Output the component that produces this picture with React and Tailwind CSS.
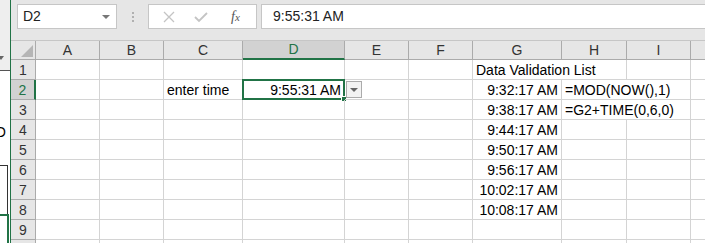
import React from 'react';

const cols = ['A', 'B', 'C', 'D', 'E', 'F', 'G', 'H', 'I', 'J'];

// cell contents: key = col+row
const cells = {
    G1: { text: 'Data Validation List', align: 'left', spill: true },
    C2: { text: 'enter time', align: 'left' },
    D2: { text: '9:55:31 AM', align: 'right' },
    G2: { text: '9:32:17 AM', align: 'right' },
    H2: { text: '=MOD(NOW(),1)', align: 'left', spill: true },
    G3: { text: '9:38:17 AM', align: 'right' },
    H3: { text: '=G2+TIME(0,6,0)', align: 'left', spill: true },
    G4: { text: '9:44:17 AM', align: 'right' },
    G5: { text: '9:50:17 AM', align: 'right' },
    G6: { text: '9:56:17 AM', align: 'right' },
    G7: { text: '10:02:17 AM', align: 'right' },
    G8: { text: '10:08:17 AM', align: 'right' },
};

const rows = [1, 2, 3, 4, 5, 6, 7, 8, 9, 10];

const LeftStrip = () => (
    <div className="relative w-[10px] shrink-0 bg-white">
        <div className="h-[71px] bg-[#eeeeee] border-b border-[#555]" />
        <div className="absolute left-0 top-[56px] w-0 h-0 border-l-[3px] border-r-[3px] border-t-[4px] border-l-transparent border-r-transparent border-t-[#666] -translate-x-[2px]" />
        <span className="absolute -left-[5px] top-[124px] text-[14px] leading-[16px] text-black">O</span>
        <div className="absolute left-0 top-[165px] w-[8px] border-t border-[#333]" />
        <div className="absolute left-[7px] top-[165px] h-[50px] border-l border-[#333]" />
        <div className="absolute left-0 top-[214px] w-[8px] border-t-2 border-[#217346]" />
        <div className="absolute left-[7px] top-[214px] bottom-0 border-l-2 border-[#217346]" />
    </div>
);

const Toolbar = () => (
    <div className="h-[40px] shrink-0 flex items-start pt-[4px] pl-[6px] bg-[#e6e6e6]">
        <div className="w-[100px] h-[25px] bg-white border border-[#c6c6c6] flex items-center justify-between pl-[5px] pr-[6px]">
            <span className="text-[14px] text-[#222]">D2</span>
            <div className="w-0 h-0 border-l-[4px] border-r-[4px] border-t-[4px] border-l-transparent border-r-transparent border-t-[#777]" />
        </div>
        <div className="w-[31px] h-[25px] flex flex-col items-center justify-center gap-[2px]">
            <div className="w-[2px] h-[2px] bg-[#b0b0b0]" />
            <div className="w-[2px] h-[2px] bg-[#b0b0b0]" />
            <div className="w-[2px] h-[2px] bg-[#b0b0b0]" />
        </div>
        <div className="w-[109px] h-[25px] bg-white border border-[#c6c6c6] flex items-center">
            <svg width="12" height="12" viewBox="0 0 12 12" className="ml-[14px]">
                <path d="M1 1 L11 11 M11 1 L1 11" stroke="#c4c4c4" strokeWidth="1.3" fill="none" />
            </svg>
            <svg width="14" height="12" viewBox="0 0 14 12" className="ml-[19px]">
                <path d="M1 6 L5 10 L13 2" stroke="#c4c4c4" strokeWidth="1.8" fill="none" />
            </svg>
            <span className="ml-[23px] text-[14px] italic text-[#555] font-['Liberation_Serif',serif] leading-none">
                f<span className="text-[11px]">x</span>
            </span>
        </div>
        <div className="flex-1 h-[25px] bg-white border border-[#c6c6c6] border-r-0 ml-[4px] flex items-center pl-[11px]">
            <span className="text-[14px] text-[#222]">9:55:31 AM</span>
        </div>
    </div>
);

const Sheet = () => (
    <div className="shrink-0 grid grid-cols-[25px_64px_64px_79px_102px_64px_64px_89px_65px_64px_64px] grid-rows-[19px_repeat(10,20px)] bg-white border-t border-[#c6c6c6]">
        {/* corner */}
        <div className="bg-[#e6e6e6] border-r border-b border-[#ababab] flex items-end justify-end pr-[2px] pb-[2px]">
            <svg width="12" height="12" viewBox="0 0 12 12">
                <polygon points="12,0 12,12 0,12" fill="#b5b5b5" />
            </svg>
        </div>
        {cols.map((c) => (
            <div
                key={c}
                className={
                    c === 'D'
                        ? 'bg-[#d2d2d2] border-r border-[#ababab] border-b-2 border-b-[#217346] flex items-center justify-center text-[14px] text-[#217346]'
                        : 'bg-[#e6e6e6] border-r border-b border-[#ababab] flex items-center justify-center text-[14px] text-[#333]'
                }
            >
                {c}
            </div>
        ))}
        {rows.map((r) => (
            <React.Fragment key={r}>
                <div
                    className={
                        r === 2
                            ? 'bg-[#d2d2d2] border-b border-[#ababab] border-r-2 border-r-[#217346] flex items-center justify-center pt-[1px] text-[14px] text-[#217346]'
                            : 'bg-[#e6e6e6] border-r border-b border-[#ababab] flex items-center justify-center pt-[1px] text-[14px] text-[#333]'
                    }
                >
                    {r < 10 ? r : ''}
                </div>
                {cols.map((c) => {
                    const cell = cells[c + r];
                    const selected = c === 'D' && r === 2;
                    return (
                        <div
                            key={c}
                            className={
                                'relative border-b border-[#d4d4d4] flex items-center pt-[2px] text-[14px] text-black whitespace-nowrap leading-[17px] ' +
                                (cell && cell.spill ? 'z-10 ' : 'border-r ') +
                                (cell && cell.align === 'right' ? 'justify-end pr-[3px]' : 'pl-[3px]')
                            }
                        >
                            {cell && <span>{cell.text}</span>}
                            {selected && (
                                <>
                                    <div className="absolute -left-[1px] -top-[1px] -right-[1px] -bottom-[1px] border-2 border-[#217346]" />
                                    <div className="absolute -right-[3px] -bottom-[3px] w-[6px] h-[6px] bg-[#217346] border border-white" />
                                    <div className="absolute left-[calc(100%+2px)] top-[1px] w-[16px] h-[17px] bg-[#f3f3f3] border border-[#ababab] flex items-center justify-center">
                                        <div className="w-0 h-0 border-l-[4px] border-r-[4px] border-t-[4px] border-l-transparent border-r-transparent border-t-[#666]" />
                                    </div>
                                </>
                            )}
                        </div>
                    );
                })}
            </React.Fragment>
        ))}
    </div>
);

export default function App() {
    return (
        <div className="flex w-[705px] h-[243px] overflow-hidden bg-white font-['Liberation_Sans',Arial,sans-serif]">
            <LeftStrip />
            <div className="w-px shrink-0 bg-[#217346]" />
            <div className="flex-1 min-w-0 flex flex-col bg-[#e6e6e6]">
                <Toolbar />
                <Sheet />
            </div>
        </div>
    );
}
